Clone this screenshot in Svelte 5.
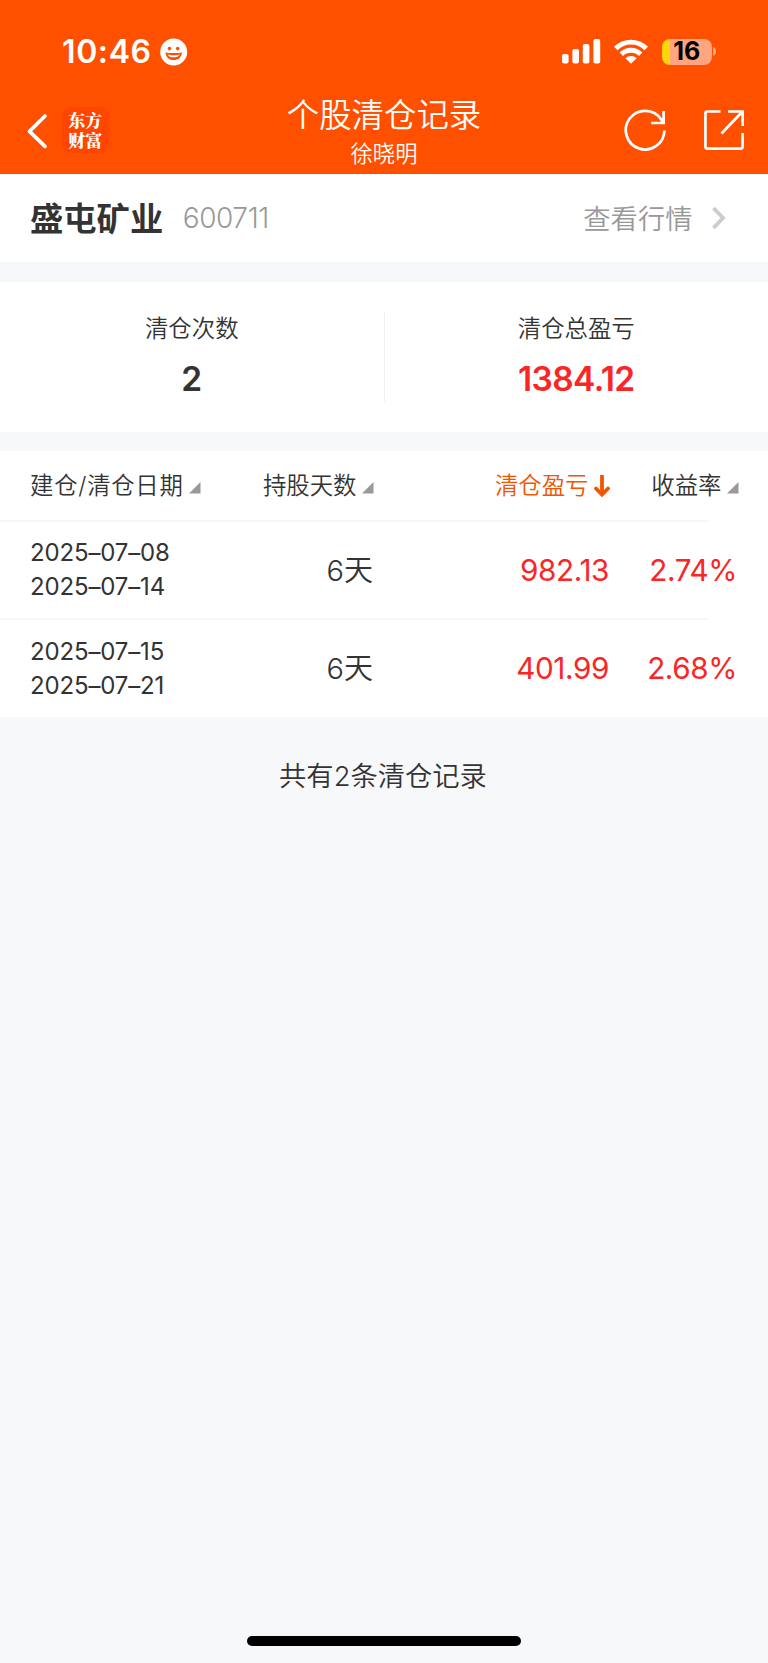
<script>
  const columns = [
    { label: '建仓/清仓日期', active: false },
    { label: '持股天数', active: false },
    { label: '清仓盈亏', active: true },
    { label: '收益率', active: false }
  ];
  const records = [
    { open: '2025–07–08', close: '2025–07–14', days: 6, profit: '982.13', rate: '2.74%' },
    { open: '2025–07–15', close: '2025–07–21', days: 6, profit: '401.99', rate: '2.68%' }
  ];
</script>

<div class="page">
  <header>
    <div class="status">
      <div class="clock">
        <span class="time">10:46</span>
        <svg width="28" height="28" viewBox="0 0 28 28">
          <circle cx="13.7" cy="14" r="13.5" fill="#fff" />
          <circle cx="9.5" cy="10.6" r="1.8" fill="#ff5000" />
          <circle cx="17.7" cy="10.6" r="1.8" fill="#ff5000" />
          <path d="M5.5 14.2C8.2 15.4 19.2 15.4 21.9 14.2C21.7 19 18.5 22.1 13.7 22.1S5.7 19 5.5 14.2Z" fill="#ff5000" />
          <path d="M7.5 16.4C10.7 17.4 16.7 17.4 19.9 16.4C18.7 18.5 16.7 19.3 13.7 19.3S8.7 18.5 7.5 16.4Z" fill="#fff" />
        </svg>
      </div>
      <div class="indicators">
        <svg width="39" height="25" viewBox="0 0 39 25" fill="#fff">
          <rect x="0" y="15" width="6.6" height="9.4" rx="2" />
          <rect x="10.4" y="10" width="6.6" height="14.4" rx="2" />
          <rect x="20.8" y="5" width="6.6" height="19.4" rx="2" />
          <rect x="31.4" y="0" width="6.8" height="24.4" rx="2" />
        </svg>
        <svg class="wifi" width="34" height="25" viewBox="0 0 34 25" fill="none" stroke="#fff" stroke-width="4.9">
          <path d="M1.8 9.4A21.5 21.5 0 0 1 32.2 9.4" />
          <path d="M7.3 15.3A13.8 13.8 0 0 1 26.7 15.3" />
          <path d="M17 24.8L11.4 19.3A8 8 0 0 1 22.6 19.3Z" fill="#fff" stroke="none" />
        </svg>
        <div class="battery"><span>16</span></div>
        <svg class="tip" width="3" height="9" viewBox="0 0 3 9"><path d="M0 0C4 1.5 4 7.5 0 9Z" fill="#ffa680" /></svg>
      </div>
    </div>
    <nav>
      <div class="side">
        <svg class="back" width="20" height="36" viewBox="0 0 20 36" fill="none" stroke="#fff" stroke-width="3.6" stroke-linecap="round" stroke-linejoin="round"><path d="M18 3L2.5 18.4L18 33.4" /></svg>
        <div class="logo"><div>东方</div><div>财富</div></div>
      </div>
      <div class="titles">
        <h1>个股清仓记录</h1>
        <p>徐晓明</p>
      </div>
      <div class="side actions">
        <svg width="44" height="44" viewBox="0 0 44 44" fill="none" stroke="#fff" stroke-width="2.7">
          <path d="M41.4 22.4A19.3 19.3 0 1 1 38 11.2L40.6 15" />
          <path d="M40.6 3V15H28.2" />
        </svg>
        <svg width="44" height="44" viewBox="0 0 44 44" fill="none" stroke="#fff" stroke-width="2.7">
          <path d="M18.5 3.5H5.5Q3.4 3.5 3.4 5.5V38.5Q3.4 40.6 5.5 40.6H38.5Q40.6 40.6 40.6 38.5V25" />
          <path d="M26 3.5H40.6V18M40 4L19.5 25.5" />
        </svg>
      </div>
    </nav>
  </header>

  <section class="stock">
    <h2>盛屯矿业</h2>
    <span class="code">600711</span>
    <span class="quote">查看行情</span>
    <svg width="15" height="24" viewBox="0 0 15 24" fill="none" stroke="#ccc" stroke-width="3.8"><path d="M1.5 2L11 12L1.5 22" /></svg>
  </section>

  <section class="summary">
    <div class="stat">
      <span class="label">清仓次数</span>
      <strong>2</strong>
    </div>
    <div class="rule"></div>
    <div class="stat">
      <span class="label">清仓总盈亏</span>
      <strong class="gain total">1384.12</strong>
    </div>
  </section>

  <section class="table">
    <div class="row head">
      {#each columns as column}
        <div class="cell" class:active={column.active}>
          <span>{column.label}</span>
          {#if column.active}
            <svg class="arrow" width="16" height="24" viewBox="0 0 16 24" fill="none" stroke="#f25500" stroke-width="3.8"><path d="M8 1V21" /><path d="M2 14.5L8 20.5L14 14.5" stroke-linecap="round" /></svg>
          {:else}
            <svg class="sort" width="12" height="12" viewBox="0 0 12 12"><path d="M11.5 0V11.5H0Z" fill="#999" /></svg>
          {/if}
        </div>
      {/each}
    </div>
    {#each records as record}
      <div class="row">
        <div class="dates"><span>{record.open}</span><span>{record.close}</span></div>
        <div class="days">{record.days}天</div>
        <div class="number gain">{record.profit}</div>
        <div class="number gain rate">{record.rate}</div>
      </div>
    {/each}
  </section>

  <p class="count">共有2条清仓记录</p>
  <div class="home"></div>
</div>

<style>
  :global(body) { margin: 0; background: #f7f8fa; }
  .page {
    display: flex;
    flex-direction: column;
    width: 768px;
    height: 1663px;
    box-sizing: border-box;
    background: #f7f8fa;
    color: #333;
    font-family: Inter, "Noto Sans CJK SC", sans-serif;
    font-weight: 350;
    white-space: nowrap;
  }
  h1, h2, p { margin: 0; font-weight: 350; }
  svg { display: block; flex: none; }
  header { height: 173.5px; background: #ff5000; color: #fff; flex: none; }
  .status { display: flex; justify-content: space-between; height: 90px; padding: 0 52px 0 62px; }
  .clock { display: flex; align-items: flex-start; padding-top: 37.5px; }
  .time { width: 98px; font-size: 32px; line-height: 28px; font-weight: 600; letter-spacing: 0.6px; }
  .indicators { display: flex; align-items: flex-start; padding-top: 38.5px; }
  .wifi { margin-left: 13.2px; }
  .battery {
    width: 49.5px;
    height: 26px;
    margin-left: 14.3px;
    border-radius: 8px;
    background: linear-gradient(90deg, #ffd60a 8px, #ffa680 8px);
    color: #000;
    font-size: 25px;
    line-height: 25px;
    font-weight: 700;
    text-align: center;
  }
  .tip { margin: 8.5px 0 0 1.5px; }
  nav { display: flex; justify-content: space-between; height: 83px; }
  .side { display: flex; align-items: flex-start; width: 240px; }
  .back { margin: 23px 0 0 27px; }
  .logo {
    width: 46.5px;
    height: 46px;
    margin: 17px 0 0 15px;
    padding-top: 5px;
    box-sizing: border-box;
    border-radius: 9px;
    background: #ff4600;
    font-size: 17px;
    line-height: 19.6px;
    font-weight: 900;
    font-family: "Liberation Sans", "Noto Serif CJK SC", "Noto Sans CJK SC", sans-serif;
    text-align: center;
  }
  .titles { text-align: center; }
  h1 { padding-top: 6px; font-size: 32.4px; line-height: 40px; }
  .titles p { padding-top: 2.5px; font-size: 22.3px; line-height: 30px; }
  .actions { justify-content: flex-end; gap: 35px; padding: 18px 22px 0 0; width: 218px; }

  .stock { display: flex; align-items: center; height: 88.5px; padding: 0 41px 0 30px; background: #fff; flex: none; }
  h2 { padding-top: 2px; font-size: 33.3px; line-height: 44px; font-weight: 700; }
  .code { margin-left: 19.5px; color: #999; font-size: 28px; font-weight: 300; letter-spacing: -0.4px; }
  .quote { margin: -2px 19.5px 0 auto; color: #999; font-size: 27.3px; }

  .summary { display: flex; height: 150px; margin: 20px 0 19px; background: #fff; flex: none; }
  .stat { display: flex; flex: 1; flex-direction: column; align-items: center; }
  .label { margin-top: 30px; font-size: 23.4px; line-height: 34px; }
  strong { margin-top: 12.5px; font-size: 33.5px; line-height: 40px; font-weight: 600; }
  .total { letter-spacing: -0.6px; }
  .rule { width: 1px; height: 90px; margin-top: 30px; background: #f0f1f3; }
  .gain { color: #f92626; }

  .table { background: #fff; flex: none; }
  .row {
    display: grid;
    grid-template-columns: 171px 173px 236px 129px;
    align-items: center;
    height: 98.3px;
    padding: 0 29px 0 30px;
    background: linear-gradient(#f6f7f8, #f6f7f8) 0 0 / 709px 2px no-repeat;
  }
  .head { height: 69px; background: none; }
  .cell { display: flex; align-items: center; justify-content: flex-end; padding-top: 1px; font-size: 23.4px; line-height: 34px; }
  .cell:first-child span { letter-spacing: 0.7px; }
  .sort { margin: 4px 0 0 5.5px; }
  .active { color: #f25500; }
  .arrow { margin: -1px 0 0 5.5px; }
  .dates { display: flex; flex-direction: column; padding-top: 2.5px; font-size: 24px; line-height: 34px; letter-spacing: -0.15px; font-weight: 400; }
  .days { padding: 0 1px 3px 0; text-align: right; font-size: 29px; }
  .number { padding: 1px 1px 0 0; text-align: right; font-size: 29.7px; letter-spacing: -0.4px; font-weight: 400; }
  .rate { padding-right: 2px; }
  .count { margin-top: 42px; padding-right: 2px; text-align: center; font-size: 27.3px; line-height: 36px; }
  .home { width: 274px; height: 10px; margin: auto auto 17px; border-radius: 5px; background: #000; }
</style>
